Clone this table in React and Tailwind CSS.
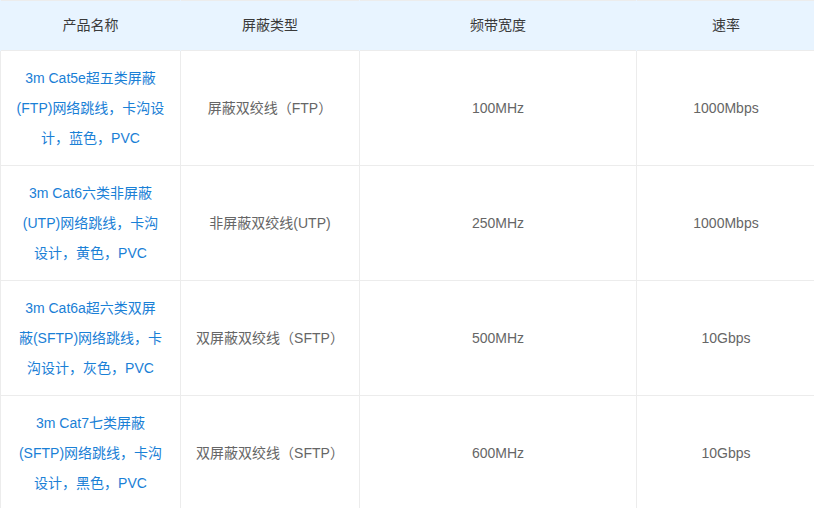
import React from "react";

const rows = [
  {
    name: ["3m Cat5e超五类屏蔽", "(FTP)网络跳线，卡沟设", "计，蓝色，PVC"],
    shield: "屏蔽双绞线（FTP）",
    band: "100MHz",
    rate: "1000Mbps",
  },
  {
    name: ["3m Cat6六类非屏蔽", "(UTP)网络跳线，卡沟", "设计，黄色，PVC"],
    shield: "非屏蔽双绞线(UTP)",
    band: "250MHz",
    rate: "1000Mbps",
  },
  {
    name: ["3m Cat6a超六类双屏", "蔽(SFTP)网络跳线，卡", "沟设计，灰色，PVC"],
    shield: "双屏蔽双绞线（SFTP）",
    band: "500MHz",
    rate: "10Gbps",
  },
  {
    name: ["3m Cat7七类屏蔽", "(SFTP)网络跳线，卡沟", "设计，黑色，PVC"],
    shield: "双屏蔽双绞线（SFTP）",
    band: "600MHz",
    rate: "10Gbps",
  },
];

const headers = ["产品名称", "屏蔽类型", "频带宽度", "速率"];

export default function App() {
  return (
    <div
      className="w-[814px] h-[508px] overflow-hidden bg-white"
      style={{ fontFamily: '"Liberation Sans", "Noto Sans CJK SC", sans-serif' }}
    >
      <table className="w-[815px] table-fixed border-collapse border border-[#ececec]">
        <colgroup>
          <col className="w-[180px]" />
          <col className="w-[179px]" />
          <col className="w-[277px]" />
          <col className="w-[179px]" />
        </colgroup>
        <thead>
          <tr className="h-[50px] bg-[#e8f4ff]">
            {headers.map((h) => (
              <th key={h} className="border-x border-[#e8f4ff] text-[14px] font-normal text-[#3a3a3a] text-center">
                {h}
              </th>
            ))}
          </tr>
        </thead>
        <tbody>
          {rows.map((r, i) => (
            <tr key={i} className="h-[115px]">
              <td className="border border-[#ececec] text-center align-middle text-[14px] leading-[30px] text-[#1a80d6]">
                {r.name.map((line, j) => (
                  <span key={j} className="block whitespace-nowrap">
                    {line}
                  </span>
                ))}
              </td>
              <td className="border border-[#ececec] text-center text-[14px] text-[#666666] whitespace-nowrap">
                {r.shield}
              </td>
              <td className="border border-[#ececec] text-center text-[14px] text-[#666666]">{r.band}</td>
              <td className="border border-[#ececec] text-center text-[14px] text-[#666666]">{r.rate}</td>
            </tr>
          ))}
        </tbody>
      </table>
    </div>
  );
}
